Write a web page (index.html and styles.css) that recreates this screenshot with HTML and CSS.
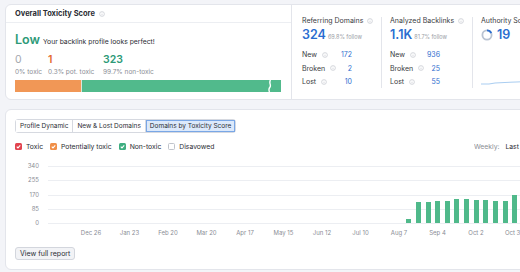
FILE: index.html
```html
<!DOCTYPE html>
<html>
<head>
    <title>Backlink Audit Overview</title>
    <link rel="stylesheet" href="styles.css">
</head>
<body>
<div class="page">
    <section class="card summary">
        <div class="toxicity">
            <div class="card-head">Overall Toxicity Score
                <svg class="info" viewBox="0 0 8 8"><circle cx="4" cy="4" r="3.2"/><path d="M4 3.6v2.2M4 2.2v.5"/></svg>
            </div>
            <div class="tox-body">
                <div class="verdict"><span class="verdict-level">Low</span> Your backlink profile looks perfect!</div>
                <div class="tox-counts">
                    <span class="count count-toxic">0</span>
                    <span class="count count-pot">1</span>
                    <span class="count count-ok">323</span>
                    <span class="count-label">0% toxic</span>
                    <span class="count-label">0.3% pot. toxic</span>
                    <span class="count-label">99.7% non-toxic</span>
                </div>
                <div class="tox-bar">
                    <div class="seg seg-pot" style="width: 66px"></div>
                    <div class="seg seg-ok">
                        <svg class="bar-break" viewBox="0 0 6 12"><path d="M3.5 0 C1.5 3, 4.5 5, 3 7 S1.5 10, 2.5 12"/></svg>
                    </div>
                </div>
            </div>
        </div>

        <div class="stats">
            <div class="stat">
                <div class="stat-title">Referring Domains
                    <svg class="info" viewBox="0 0 8 8"><circle cx="4" cy="4" r="3.2"/><path d="M4 3.6v2.2M4 2.2v.5"/></svg>
                </div>
                <div class="stat-main"><span class="stat-value">324</span><span class="stat-sub">69.8% follow</span></div>
                <div class="stat-rows">
                    <div class="stat-row"><span class="row-label">New <svg class="info" viewBox="0 0 8 8"><circle cx="4" cy="4" r="3.2"/><path d="M4 3.6v2.2M4 2.2v.5"/></svg></span><span class="row-val">172</span></div>
                    <div class="stat-row"><span class="row-label">Broken <svg class="info" viewBox="0 0 8 8"><circle cx="4" cy="4" r="3.2"/><path d="M4 3.6v2.2M4 2.2v.5"/></svg></span><span class="row-val">2</span></div>
                    <div class="stat-row"><span class="row-label">Lost <svg class="info" viewBox="0 0 8 8"><circle cx="4" cy="4" r="3.2"/><path d="M4 3.6v2.2M4 2.2v.5"/></svg></span><span class="row-val">10</span></div>
                </div>
            </div>
            <div class="stat">
                <div class="stat-title">Analyzed Backlinks
                    <svg class="info" viewBox="0 0 8 8"><circle cx="4" cy="4" r="3.2"/><path d="M4 3.6v2.2M4 2.2v.5"/></svg>
                </div>
                <div class="stat-main"><span class="stat-value">1.1K</span><span class="stat-sub">81.7% follow</span></div>
                <div class="stat-rows">
                    <div class="stat-row"><span class="row-label">New <svg class="info" viewBox="0 0 8 8"><circle cx="4" cy="4" r="3.2"/><path d="M4 3.6v2.2M4 2.2v.5"/></svg></span><span class="row-val">936</span></div>
                    <div class="stat-row"><span class="row-label">Broken <svg class="info" viewBox="0 0 8 8"><circle cx="4" cy="4" r="3.2"/><path d="M4 3.6v2.2M4 2.2v.5"/></svg></span><span class="row-val">25</span></div>
                    <div class="stat-row"><span class="row-label">Lost <svg class="info" viewBox="0 0 8 8"><circle cx="4" cy="4" r="3.2"/><path d="M4 3.6v2.2M4 2.2v.5"/></svg></span><span class="row-val">55</span></div>
                </div>
            </div>
            <div class="stat stat-authority">
                <div class="stat-title">Authority Score</div>
                <div class="stat-main">
                    <svg class="score-ring" viewBox="0 0 12 12">
                        <circle class="ring-bg" cx="6" cy="6" r="4.6"/>
                        <path class="ring-fg" d="M6 1.4 A4.6 4.6 0 0 1 10.2 4.1"/>
                    </svg>
                    <span class="stat-value">19</span>
                </div>
                <svg class="sparkline" viewBox="0 0 60 8" preserveAspectRatio="none">
                    <polyline points="0,6 8,6 14,5 22,4.6 30,4.2 38,3.9 46,3.4 60,2.8"/>
                </svg>
            </div>
        </div>
    </section>

    <section class="card trend">
        <div class="tabs">
            <button class="tab">Profile Dynamic</button>
            <button class="tab">New &amp; Lost Domains</button>
            <button class="tab tab-active">Domains by Toxicity Score</button>
        </div>

        <div class="toolbar">
            <div class="legend">
                <label class="check"><span class="box box-toxic"><svg viewBox="0 0 8 8"><path d="M2 4.2l1.4 1.4L6 2.8"/></svg></span>Toxic</label>
                <label class="check"><span class="box box-pot"><svg viewBox="0 0 8 8"><path d="M2 4.2l1.4 1.4L6 2.8"/></svg></span>Potentially toxic</label>
                <label class="check"><span class="box box-ok"><svg viewBox="0 0 8 8"><path d="M2 4.2l1.4 1.4L6 2.8"/></svg></span>Non-toxic</label>
                <label class="check"><span class="box box-empty"></span>Disavowed</label>
            </div>
            <div class="period"><span class="period-label">Weekly:</span> Last 12 months</div>
        </div>

        <div class="chart">
            <div class="y-axis">
                <span>340</span><span>255</span><span>170</span><span>85</span><span>0</span>
            </div>
            <div class="plot-wrap">
                <div class="plot">
                    <div class="gridlines">
                        <i></i><i></i><i></i><i></i><i></i>
                    </div>
                    <div class="bars">
                        <div class="slot"><div class="bar" style="height: 4px"></div></div>
                        <div class="slot"><div class="bar" style="height: 21px"></div></div>
                        <div class="slot"><div class="bar" style="height: 21px"></div></div>
                        <div class="slot"><div class="bar" style="height: 22px"></div></div>
                        <div class="slot"><div class="bar" style="height: 22px"></div></div>
                        <div class="slot"><div class="bar" style="height: 24px"></div></div>
                        <div class="slot"><div class="bar" style="height: 24px"></div></div>
                        <div class="slot"><div class="bar" style="height: 23px"></div></div>
                        <div class="slot"><div class="bar" style="height: 23px"></div></div>
                        <div class="slot"><div class="bar" style="height: 22px"></div></div>
                        <div class="slot"><div class="bar" style="height: 22px"></div></div>
                        <div class="slot"><div class="bar" style="height: 28px"></div></div>
                    </div>
                </div>
                <div class="x-axis">
                    <span>Dec 26</span><span>Jan 23</span><span>Feb 20</span><span>Mar 20</span>
                    <span>Apr 17</span><span>May 15</span><span>Jun 12</span><span>Jul 10</span>
                    <span>Aug 7</span><span>Sep 4</span><span>Oct 2</span><span>Oct 30</span>
                </div>
            </div>
        </div>

        <button class="report-button">View full report</button>
    </section>
</div>
</body>
</html>
```

FILE: styles.css
```css
html, body {
    margin: 0;
    padding: 0;
}

body {
    width: 520px;
    height: 272px;
    overflow: hidden;
    background-color: #f3f4f8;
    font-family: Inter, "Liberation Sans", sans-serif;
    color: #2b2d33;
}

.page {
    width: 560px;
    padding: 4px 0 0 5px;
}

.card {
    background-color: #fff;
    border: 1px solid #e3e5eb;
    border-radius: 6px;
    box-sizing: border-box;
}

/* top summary card */
.summary {
    display: flex;
    height: 96px;
}

.toxicity {
    width: 285px;
    flex-shrink: 0;
}

.card-head {
    height: 17px;
    line-height: 17px;
    padding: 0 9px;
    font-size: 7.5px;
    font-weight: 700;
    border-bottom: 1px solid #eceef2;
    display: flex;
    align-items: center;
    gap: 4px;
}

.info {
    width: 6px;
    height: 6px;
    fill: none;
    stroke: #c3c6ce;
    stroke-width: 0.9;
    flex-shrink: 0;
}

.tox-body {
    padding: 10px 10px 0 9px;
}

.verdict {
    line-height: 14px;
    font-size: 6.8px;
    display: flex;
    align-items: baseline;
    gap: 3px;
}

.verdict-level {
    font-size: 12.5px;
    font-weight: 600;
    color: #2e9a78;
}

.tox-counts {
    display: grid;
    grid-template-columns: 33px 55px auto;
    margin-top: 5px;
}

.count {
    font-size: 10.5px;
    line-height: 12px;
    font-weight: 600;
}

.count-toxic { color: #a4a7ae; font-weight: 400; }
.count-pot { color: #e4692c; }
.count-ok { color: #2e9a78; }

.count-label {
    font-size: 6.5px;
    line-height: 8px;
    margin-top: 2px;
    color: #8a8d95;
}

.tox-bar {
    display: flex;
    height: 12px;
    margin-top: 4px;
    gap: 1px;
    background-color: #d9e7dc;
}

.seg-pot {
    background-color: #f19756;
}

.seg-ok {
    flex: 1;
    background-color: #51ba8c;
    display: flex;
    justify-content: flex-end;
    padding-right: 8px;
}

.bar-break {
    width: 6px;
    height: 12px;
    fill: none;
    stroke: #fff;
    stroke-width: 1.4;
}

/* stats */
.stats {
    display: flex;
    border-left: 1px solid #e3e5eb;
    flex: 1;
}

.stat {
    height: 71px;
    margin-top: 12px;
    padding-left: 10px;
    width: 89px;
    box-sizing: border-box;
    display: flex;
    flex-direction: column;
}

.stat + .stat {
    border-left: 1px solid #e3e5eb;
    padding-left: 8px;
    width: 91px;
}

.stat-title {
    font-size: 7px;
    line-height: 8px;
    color: #3a3c42;
    display: flex;
    align-items: center;
    gap: 4px;
    white-space: nowrap;
}

.stat-main {
    display: flex;
    align-items: baseline;
    gap: 2px;
    margin-top: 2px;
    line-height: 15px;
}

.stat-value {
    font-size: 12.5px;
    font-weight: 600;
    color: #2a6dd0;
}

.stat-sub {
    font-size: 5.5px;
    color: #9a9da4;
}

.stat-rows {
    width: 50px;
    margin-top: 3px;
}

.stat-row {
    display: flex;
    justify-content: space-between;
    align-items: center;
    font-size: 7px;
    line-height: 13.5px;
}

.row-label {
    display: flex;
    align-items: center;
    gap: 5px;
    color: #3a3c42;
}

.row-val {
    color: #2f6ecf;
}

.stat-authority {
    width: auto;
    flex: 1;
}

.stat-authority .stat-main {
    align-items: center;
    gap: 4px;
}

.score-ring {
    width: 12px;
    height: 12px;
    fill: none;
    stroke-width: 1.8;
}

.ring-bg { stroke: #b9c3d2; }
.ring-fg { stroke: #2a6dd0; }

.sparkline {
    margin-top: auto;
    margin-bottom: 2px;
    width: 60px;
    height: 8px;
    fill: none;
    stroke: #a9cdf1;
    stroke-width: 1;
}

/* trend card */
.trend {
    width: 545px;
    margin-top: 9px;
    padding: 9px 10px 9px 9px;
}

.tabs {
    display: flex;
    width: max-content;
    border: 1px solid #d6d9e0;
    border-radius: 3px;
}

.tab {
    font-family: inherit;
    font-size: 6.5px;
    height: 12px;
    line-height: 12px;
    padding: 0 4px;
    border: none;
    background: #fff;
    color: #2b2d33;
    margin: 0;
}

.tab + .tab {
    border-left: 1px solid #d6d9e0;
}

.tab-active {
    background-color: #dce9fb;
    box-shadow: inset 0 0 0 1px #79a7e6;
}

.toolbar {
    display: flex;
    align-items: center;
    margin-top: 9px;
    height: 9px;
    font-size: 6.8px;
    white-space: nowrap;
}

.legend {
    display: flex;
    gap: 7px;
}

.check {
    display: flex;
    align-items: center;
    gap: 4px;
}

.box {
    width: 7px;
    height: 7px;
    border-radius: 1.5px;
    display: flex;
}

.box svg {
    width: 7px;
    height: 7px;
    fill: none;
    stroke: #fff;
    stroke-width: 1.2;
}

.box-toxic { background-color: #e2444f; }
.box-pot { background-color: #f08f48; }
.box-ok { background-color: #3fae80; }
.box-empty {
    border: 1px solid #c0c4cc;
    box-sizing: border-box;
}

.period {
    margin-left: auto;
    width: 65px;
    overflow: hidden;
}

.period-label {
    color: #8a8d95;
    margin-right: 4px;
}

/* chart */
.chart {
    display: flex;
    margin-top: 15px;
}

.y-axis {
    width: 24px;
    height: 65px;
    margin-top: -4px;
    display: flex;
    flex-direction: column;
    justify-content: space-between;
    align-items: flex-end;
    font-size: 6px;
    line-height: 8px;
    color: #8a8d95;
}

.plot-wrap {
    margin-left: 9px;
    flex: 1;
}

.plot {
    display: grid;
    height: 58px;
}

.gridlines, .bars {
    grid-area: 1 / 1;
}

.gridlines {
    display: flex;
    flex-direction: column;
    justify-content: space-between;
}

.gridlines i {
    display: block;
    height: 1px;
    background-color: #eceef2;
}

.bars {
    display: flex;
    align-items: flex-end;
    padding-left: 356px;
    padding-bottom: 1px;
}

.slot {
    width: 9.625px;
    display: flex;
    justify-content: center;
    flex-shrink: 0;
}

.bar {
    width: 5px;
    background-color: #4fb98a;
}

.x-axis {
    display: flex;
    padding-left: 23.75px;
    margin-top: 5px;
    font-size: 6px;
    line-height: 8px;
    color: #8a8d95;
}

.x-axis span {
    width: 38.5px;
    flex-shrink: 0;
    text-align: center;
    white-space: nowrap;
}

.report-button {
    display: block;
    margin-top: 10px;
    font-family: inherit;
    font-size: 7px;
    height: 13px;
    padding: 0 4px;
    color: #2b2d33;
    background-color: #f2f3f6;
    border: 1px solid #d3d6dd;
    border-radius: 3px;
}
```
